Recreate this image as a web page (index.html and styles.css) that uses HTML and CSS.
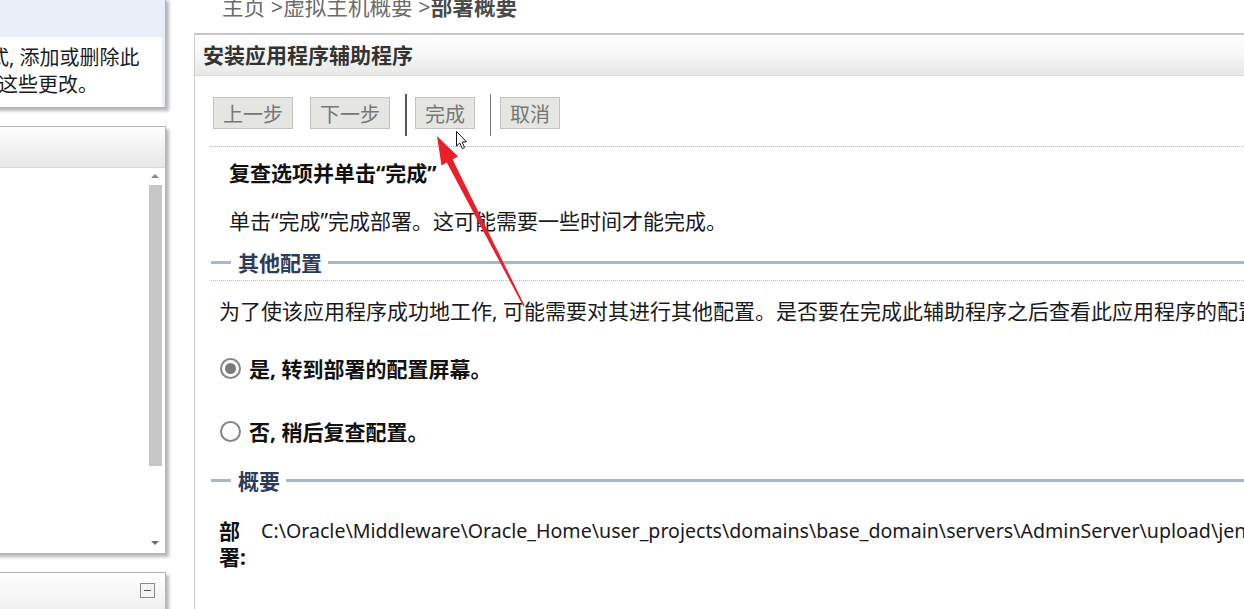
FILE: index.html
```html
<!DOCTYPE html>
<html lang="zh-CN">
<head>
<meta charset="utf-8">
<title>安装应用程序辅助程序</title>
<link rel="stylesheet" href="styles.css">
</head>
<body>
<div class="page">
  <aside class="left">
    <div class="box box-info">
      <div class="info-head"></div>
      <div class="info-body">
        <div class="info-line l1">式, 添加或删除此</div>
        <div class="info-line l2">这些更改。</div>
      </div>
    </div>
    <div class="box box-list">
      <div class="box-head"></div>
      <div class="list-body">
        <div class="list-content"></div>
        <div class="scrollbar">
          <span class="arrow-up"></span>
          <span class="thumb"></span>
          <span class="arrow-down"></span>
        </div>
      </div>
    </div>
    <div class="box box-third">
      <div class="box-head third-head">
        <span class="collapse-icon"></span>
      </div>
    </div>
  </aside>

  <main class="main">
    <div class="breadcrumb">主页 &gt;虚拟主机概要 &gt;<b>部署概要</b></div>
    <section class="panel">
      <div class="panel-head">安装应用程序辅助程序</div>
      <div class="panel-body">
        <div class="toolbar">
          <button class="btn b-prev">上一步</button>
          <button class="btn b-next">下一步</button>
          <span class="sep sep-dark"></span>
          <button class="btn b-finish">完成</button>
          <span class="sep sep-light"></span>
          <button class="btn b-cancel">取消</button>
        </div>
        <h2 class="step-title">复查选项并单击“完成”</h2>
        <p class="step-text">单击“完成”完成部署。这可能需要一些时间才能完成。</p>

        <div class="section-title first"><span class="rule short"></span><span class="label">其他配置</span><span class="rule long"></span></div>
        <div class="dotted"></div>
        <p class="para">为了使该应用程序成功地工作, 可能需要对其进行其他配置。是否要在完成此辅助程序之后查看此应用程序的配置屏幕?</p>

        <div class="radio-row r1"><span class="radio checked"></span><span class="radio-label">是, 转到部署的配置屏幕。</span></div>
        <div class="radio-row r2"><span class="radio"></span><span class="radio-label">否, 稍后复查配置。</span></div>

        <div class="section-title second"><span class="rule short"></span><span class="label">概要</span><span class="rule long"></span></div>

        <div class="summary">
          <div class="sum-label">部署:</div>
          <div class="sum-value">C:\Oracle\Middleware\Oracle_Home\user_projects\domains\base_domain\servers\AdminServer\upload\jenkins.war</div>
        </div>
      </div>
    </section>
  </main>

  <svg class="overlay" width="1244" height="609" viewBox="0 0 1244 609">
    <polygon fill="#ea1f2a" points="437,136 458,156.5 452.6,159.6 524.6,305.5 523.4,306.5 446.8,162.5 441.5,165.5"/>
    <polygon fill="#ffffff" stroke="#111" stroke-width="1" stroke-linejoin="round" points="456.5,131.5 456.5,146 459.8,143 462.3,148.6 464.6,147.6 462.1,142.1 466.5,141.8"/>
  </svg>
</div>
</body>
</html>
```

FILE: styles.css
```css
html, body {
  margin: 0;
  padding: 0;
  background: #ffffff;
}
body {
  width: 1244px;
  height: 609px;
  overflow: hidden;
  font-family: "Noto Sans", "Noto Sans CJK SC", sans-serif;
  color: #222;
}
.page {
  position: relative;
  display: flex;
  height: 609px;
  overflow: hidden;
}

/* ---------- left column ---------- */
.left {
  flex: none;
  width: 178px;
  margin-left: -12px;
  display: flex;
  flex-direction: column;
}
.box {
  flex: none;
  width: 178px;
  border: 1px solid #b4b4b4;
  box-sizing: border-box;
  background: #fff;
  box-shadow: 3px 3px 3px rgba(0, 0, 0, 0.28);
}
.box-info {
  margin-top: -2px;
  height: 110px;
  display: flex;
  flex-direction: column;
  background: #e9eef8;
}
.info-head {
  height: 38px;
  background: #e9eef8;
}
.info-body {
  flex: 1;
  background: #fff;
  margin-right: 3px;
  font-size: 20px;
  line-height: 27px;
  color: #1c1c1c;
  padding-top: 7px;
  white-space: nowrap;
  overflow: hidden;
}
.info-line.l1 { margin-left: 0; }
.info-line.l2 { margin-left: 9px; }

.box-list {
  margin-top: 18px;
  height: 428px;
  display: flex;
  flex-direction: column;
}
.box-head {
  height: 40px;
  background: linear-gradient(#ffffff, #f4f4f4 45%, #e6e7e6);
  border-bottom: 1px solid #d8d8d8;
  flex: none;
}
.list-body {
  flex: 1;
  display: flex;
}
.list-content { flex: 1; }
.scrollbar {
  width: 14px;
  margin-right: 3px;
  display: flex;
  flex-direction: column;
  align-items: center;
  padding-top: 6px;
  padding-bottom: 8px;
}
.arrow-up, .arrow-down {
  width: 0;
  height: 0;
  border-left: 4px solid transparent;
  border-right: 4px solid transparent;
}
.arrow-up { border-bottom: 4px solid #8a8a8a; }
.arrow-down { border-top: 4px solid #6a6a6a; margin-top: auto; }
.thumb {
  width: 13px;
  height: 281px;
  margin-top: 7px;
  background: #c6c6c6;
}

.box-third {
  margin-top: 18px;
  height: 60px;
}
.third-head {
  display: flex;
  justify-content: flex-end;
  padding-top: 10px;
  padding-right: 10px;
  box-sizing: border-box;
  height: 60px;
  border-bottom: none;
}
.collapse-icon {
  position: relative;
  width: 13px;
  height: 13px;
  border: 1px solid #8a8a8a;
  background: #f4f4f4;
}
.collapse-icon::after {
  content: "";
  position: absolute;
  left: 3px;
  right: 3px;
  top: 6px;
  height: 1px;
  background: #555;
}

/* ---------- main ---------- */
.main {
  flex: 1;
  margin-left: 28px;
  display: flex;
  flex-direction: column;
  min-width: 0;
  overflow: hidden;
}
.breadcrumb {
  height: 33px;
  padding-left: 28px;
  font-size: 21.6px;
  line-height: 14px;
  color: #6c6c6c;
  white-space: nowrap;
}
.breadcrumb b {
  color: #4a4a4a;
  font-weight: bold;
}
.panel {
  flex: 1;
  border-top: 2px solid #c6c6c6;
  border-left: 1px solid #cccccc;
}
.panel-head {
  height: 40px;
  line-height: 40px;
  padding-left: 8px;
  font-size: 21px;
  font-weight: bold;
  color: #333;
  background: linear-gradient(#ffffff, #f9f9f9 35%, #e8e9e7);
  border-bottom: 1px solid #d8d8d8;
  white-space: nowrap;
}
.panel-body {
  padding-left: 15px;
  white-space: nowrap;
  overflow: hidden;
}
.toolbar {
  display: flex;
  align-items: center;
  padding-top: 14px;
  padding-bottom: 10px;
  padding-left: 3px;
  border-bottom: 1px dotted #b8b8b8;
}
.btn {
  height: 32px;
  padding: 0 9px;
  font-family: inherit;
  font-size: 20px;
  color: #777;
  background: #e5e5e2;
  border: 1px solid #c2c2be;
  margin: 0;
}
.b-prev { margin-right: 17px; }
.b-next { margin-right: 15px; }
.b-finish { margin-right: 15px; }
.sep {
  height: 42px;
  margin-top: 4px;
}
.sep-dark {
  width: 2px;
  background: #5a5a5a;
  margin-right: 8px;
}
.sep-light {
  width: 1px;
  background: #777;
  margin-right: 9px;
}
.step-title {
  margin: 12px 0 0 19px;
  font-size: 21px;
  line-height: 28px;
  font-weight: bold;
  color: #111;
}
.step-text {
  margin: 20px 0 0 19px;
  font-size: 21px;
  line-height: 28px;
  color: #1a1a1a;
}
.section-title {
  display: flex;
  align-items: center;
  height: 28px;
}
.section-title.first { margin-top: 13px; }
.section-title.second { margin-top: 21px; }
.rule {
  height: 3px;
  background: #a8b8cc;
}
.rule.short { width: 20px; margin-left: 1px; }
.rule.long { flex: 1; }
.label {
  margin: 0 6px 0 7px;
  font-size: 21px;
  font-weight: bold;
  color: #2c3b58;
}
.dotted {
  margin-top: 4px;
  margin-left: 1px;
  border-top: 1px dotted #bdbdbd;
}
.para {
  margin: 16px 0 0 9px;
  font-size: 21px;
  line-height: 28px;
  color: #1a1a1a;
}
.radio-row {
  display: flex;
  align-items: center;
  height: 28px;
  margin-left: 10px;
}
.radio-row.r1 { margin-top: 29px; }
.radio-row.r2 { margin-top: 35px; }
.radio {
  width: 17px;
  height: 17px;
  border: 2px solid #858585;
  border-radius: 50%;
  background: #fff;
  margin-right: 8px;
  display: flex;
  align-items: center;
  justify-content: center;
}
.radio.checked::after {
  content: "";
  width: 11px;
  height: 11px;
  border-radius: 50%;
  background: #7a7a7a;
}
.radio-label {
  font-size: 21px;
  font-weight: bold;
  color: #111;
}
.summary {
  display: grid;
  grid-template-columns: 30px auto;
  column-gap: 12px;
  margin: 24px 0 0 9px;
  font-size: 21px;
  line-height: 26px;
}
.sum-label {
  font-weight: bold;
  color: #111;
  white-space: normal;
}
.sum-value {
  font-family: "Noto Sans", "Open Sans", sans-serif;
  font-size: 19.6px;
  color: #1a1a1a;
  white-space: nowrap;
}

/* annotation overlay (arrow + cursor drawn over the page) */
.overlay {
  position: absolute;
  left: 0;
  top: 0;
  pointer-events: none;
}
```
